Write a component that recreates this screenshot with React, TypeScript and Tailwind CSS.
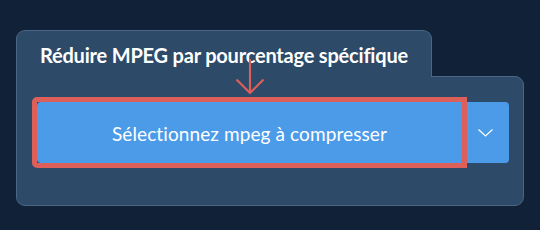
import React from "react";

export default function App() {
  return (
    <div
      className="w-[540px] h-[230px] bg-[#112238] pt-[30px] pl-[16px] overflow-hidden"
      style={{ fontFamily: "Lato, 'Noto Sans', sans-serif" }}
    >
      <div className="w-[508px]">
        <div className="relative z-10 -mb-px w-[416px] h-[47px] bg-[#2d4a69] border border-b-0 border-[#4a6686] rounded-t-[9px] pl-[23px] pt-[12px]">
          <span className="text-white font-bold text-[20px] leading-[24px] tracking-[-0.2px] whitespace-nowrap">
            Réduire MPEG par pourcentage spécifique
          </span>
        </div>
        <div className="bg-[#2d4a69] border border-[#4a6686] rounded-b-[9px] rounded-tr-[9px] h-[130px] pl-[20px] pr-[14px] pt-[25px]">
          <div className="flex h-[61px]">
            <div className="relative flex-1 bg-[#4c9be8] rounded-l-[4px] flex items-center justify-center">
              <span className="text-white text-[19px] leading-none pt-[1px] tracking-[0.1px]">
                Sélectionnez mpeg à compresser
              </span>
              <div className="absolute -inset-[5px] border-[5px] border-[#dc5f59] rounded-l-[5px] pointer-events-none" />
              <svg
                className="absolute z-20 left-1/2 -translate-x-1/2 top-[-43px]"
                width="30"
                height="36"
                viewBox="0 0 30 36"
                fill="none"
              >
                <path d="M15 0 V34" stroke="#dc5f59" strokeWidth="2.2" />
                <path d="M1.5 20.5 L15 34 L28.5 20.5" stroke="#dc5f59" strokeWidth="2.2" />
              </svg>
            </div>
            <div className="w-[47px] bg-[#4c9be8] rounded-r-[4px] flex items-center justify-center">
              <svg width="17" height="10" viewBox="0 0 17 10" fill="none">
                <path d="M1.5 1.5 L8.5 8 L15.5 1.5" stroke="white" strokeWidth="1.2" />
              </svg>
            </div>
          </div>
        </div>
      </div>
    </div>
  );
}
